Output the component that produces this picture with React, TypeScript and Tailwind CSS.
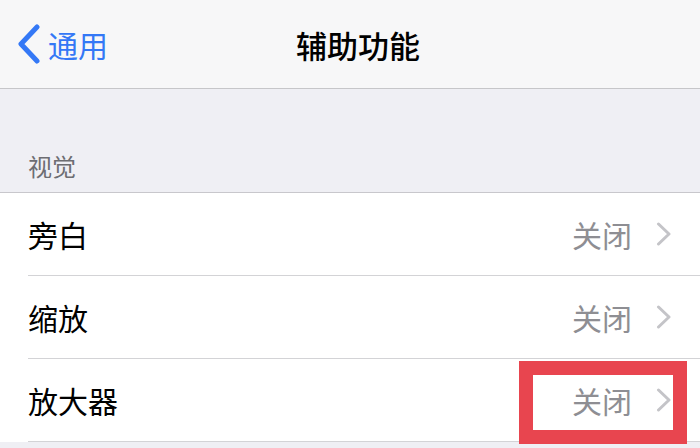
const font = "font-['Noto_Sans_CJK_SC','Noto_Sans',sans-serif]";

const rows = [
  { label: "旁白", value: "关闭" },
  { label: "缩放", value: "关闭" },
  { label: "放大器", value: "关闭" },
];

function Chevron() {
  return (
    <svg width="16" height="24" viewBox="0 0 16 24" fill="none" className="shrink-0">
      <path d="M2.5 2L13 12L2.5 22" stroke="#c4c4c8" strokeWidth="3" strokeLinecap="round" strokeLinejoin="round" />
    </svg>
  );
}

export default function App() {
  return (
    <div className={`relative w-[700px] h-[448px] overflow-hidden bg-[#efeff4] ${font}`}>
      <div className="flex items-center h-[89px] bg-[#f7f7f8] border-b border-[#c6c6c9]">
        <div className="flex-1 flex items-center pl-[16px]">
          <svg width="26" height="40" viewBox="0 0 26 40" fill="none" className="shrink-0">
            <path d="M21 3L5 20L21 37" stroke="#3478f6" strokeWidth="5" strokeLinecap="round" strokeLinejoin="round" />
          </svg>
          <span className="ml-[6px] text-[30px] leading-none text-[#3478f6]">通用</span>
        </div>
        <h1 className="text-[31px] leading-none font-medium text-black">辅助功能</h1>
        <div className="flex-1" />
      </div>

      <div className="h-[104px] flex items-end pl-[28px] pb-[14px] border-b border-[#c8c7cc]">
        <span className="text-[24px] leading-none text-[#6d6d72]">视觉</span>
      </div>

      <div className="bg-white">
        {rows.map((r) => (
          <div key={r.label} className="pl-[28px]">
            <div className="flex items-center h-[83px] pr-[28px] border-b border-[#d3d3d6]">
              <span className="flex-1 text-[30px] leading-none text-black">{r.label}</span>
              <span className="text-[30px] leading-none text-[#8e8e93] mr-[24px]">{r.value}</span>
              <Chevron />
            </div>
          </div>
        ))}
      </div>

      <div className="absolute left-[519px] top-[361px] w-[168px] h-[83px] border-[14px] border-[#e8454f]" />
    </div>
  );
}
